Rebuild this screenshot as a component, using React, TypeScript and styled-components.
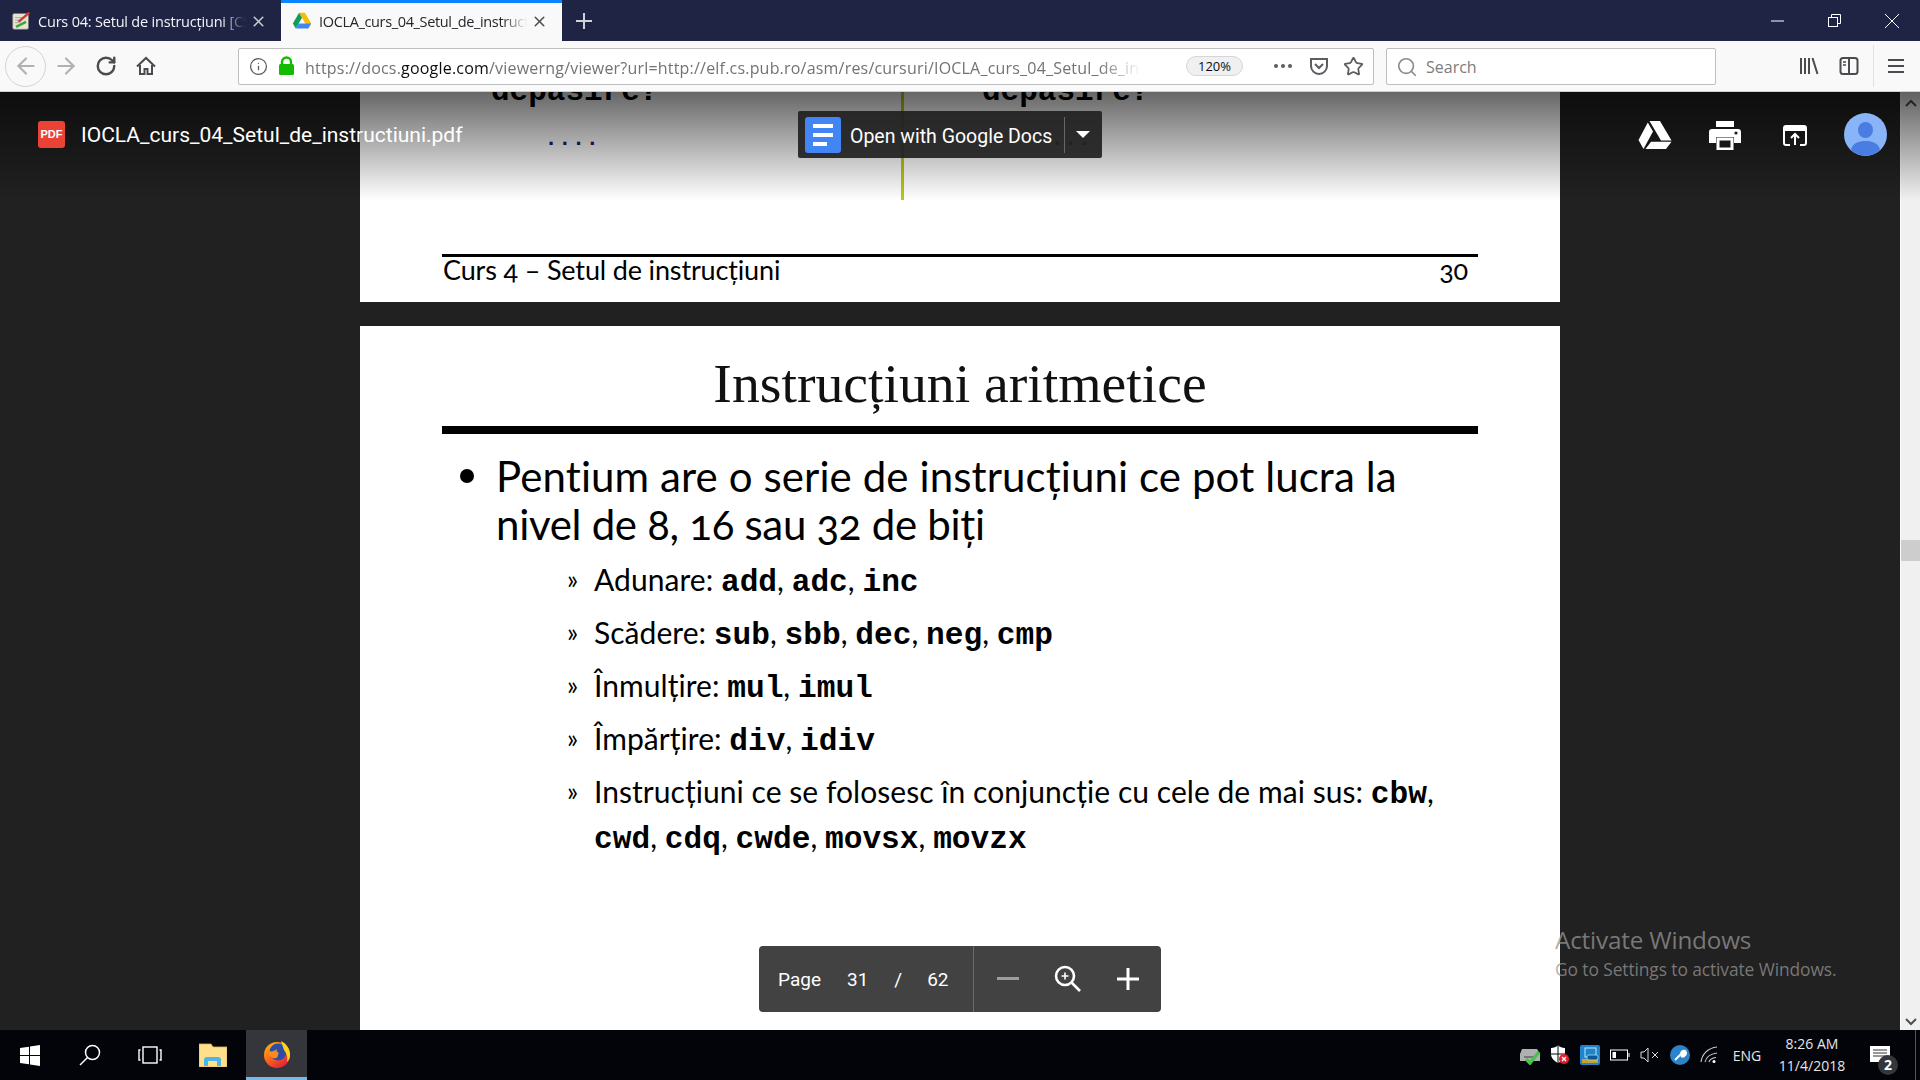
import React from "react";
import styled, { createGlobalStyle } from "styled-components";
import { ArrowLeft, ArrowRight, Info, RotateCw, Search, Star, X } from "lucide-react";

const GlobalStyle = createGlobalStyle`
	html, body {
		margin: 0;
		padding: 0;
		width: 1920px;
		height: 1080px;
		overflow: hidden;
		background: #212121;
		font-family: "Open Sans", sans-serif;
	}
`;

const Screen = styled.div`
	width: 1920px;
	height: 1080px;
	display: flex;
	flex-direction: column;
	overflow: hidden;
`;

const TabStrip = styled.div`
	height: 41px;
	flex: none;
	display: flex;
	background: #1f2445;
`;

const Tab = styled.div<{ $active?: boolean }>`
	width: 281px;
	height: 41px;
	box-sizing: border-box;
	display: flex;
	align-items: center;
	padding: ${(p) => (p.$active ? "0 11px 2px 11px" : "1px 11px 0 11px")};
	background: ${(p) => (p.$active ? "#f9f9fa" : "transparent")};
	border-top: ${(p) => (p.$active ? "3px solid #0a84ff" : "none")};
	color: ${(p) => (p.$active ? "#26262b" : "#f4f4f6")};
`;

const TabIcon = styled.svg`
	width: 20px;
	height: 20px;
	flex: none;
`;

const TabTitle = styled.div<{ $tight?: boolean }>`
	width: 208px;
	margin-left: 7px;
	font-size: 14.5px;
	letter-spacing: ${(p) => (p.$tight ? "-0.35px" : "-0.2px")};
	white-space: nowrap;
	overflow: hidden;
	mask-image: linear-gradient(to right, #000 88%, transparent 100%);
`;

const TabClose = styled.div`
	margin-left: 4px;
	display: flex;
	color: inherit;
	opacity: 0.8;
`;

const NewTab = styled.div`
	width: 44px;
	height: 41px;
	display: flex;
	align-items: center;
	justify-content: center;
	color: #d0d2da;
`;

const WindowControls = styled.div`
	margin-left: auto;
	display: flex;
`;

const WindowButton = styled.div`
	width: 57px;
	height: 41px;
	display: flex;
	align-items: center;
	justify-content: center;
`;

const Toolbar = styled.div`
	height: 51px;
	flex: none;
	box-sizing: border-box;
	display: flex;
	align-items: center;
	background: #f9f9fa;
	border-bottom: 1px solid #cfcfd2;
	padding-left: 5px;
`;

const BackButton = styled.div`
	width: 41px;
	height: 41px;
	box-sizing: border-box;
	border: 1px solid #d4d4d6;
	border-radius: 50%;
	display: flex;
	align-items: center;
	justify-content: center;
	color: #b1b1b3;
`;

const NavButton = styled.div<{ $dim?: boolean }>`
	width: 40px;
	height: 40px;
	display: flex;
	align-items: center;
	justify-content: center;
	color: ${(p) => (p.$dim ? "#b1b1b3" : "#4a4a4f")};
`;

const UrlBar = styled.div`
	width: 1136px;
	height: 37px;
	margin-left: 72px;
	box-sizing: border-box;
	border: 1px solid #bebec0;
	border-radius: 2px;
	background: #fff;
	display: flex;
	align-items: center;
	color: #5c5c61;
`;

const UrlIcon = styled.div<{ $width: number }>`
	width: ${(p) => p.$width}px;
	flex: none;
	display: flex;
	justify-content: center;
`;

const UrlText = styled.div`
	width: 836px;
	flex: none;
	margin-left: 10px;
	padding-top: 3px;
	font-size: 16px;
	letter-spacing: 0.2px;
	color: #737373;
	white-space: nowrap;
	overflow: hidden;
	mask-image: linear-gradient(to right, #000 95%, transparent 100%);
`;

const UrlDomain = styled.span`
	color: #0c0c0d;
`;

const ZoomPill = styled.div`
	width: 57px;
	height: 20px;
	margin-left: 45px;
	flex: none;
	border: 1px solid #d6d6d8;
	box-sizing: border-box;
	border-radius: 10px;
	background: #f0f0f2;
	font-size: 13px;
	line-height: 18px;
	text-align: center;
	color: #0c0c0d;
`;

const UrlSeparator = styled.div`
	width: 1px;
	height: 26px;
	margin-left: 15px;
	background: #e0e0e2;
`;

const SearchBox = styled.div`
	width: 330px;
	height: 37px;
	margin-left: 12px;
	box-sizing: border-box;
	border: 1px solid #bebec0;
	border-radius: 2px;
	background: #fff;
	display: flex;
	align-items: center;
	padding: 2px 0 0 9px;
	gap: 8px;
	color: #7c7c80;
	font-size: 16px;
`;

const ToolbarEnd = styled.div`
	margin-left: 73px;
	display: flex;
	align-items: center;
	color: #4a4a4f;
`;

const ToolbarSeparator = styled.div`
	width: 1px;
	height: 42px;
	margin: 0 3px 0 4px;
	background: #e2e2e4;
`;

const Viewer = styled.div`
	position: relative;
	flex: 1;
	min-height: 0;
	overflow: hidden;
	background: #212121;
	display: flex;
	flex-direction: column;
	align-items: center;
`;

const Page = styled.div<{ $height: number }>`
	width: 1200px;
	height: ${(p) => p.$height}px;
	flex: none;
	box-sizing: border-box;
	padding: 0 82px;
	background: #fff;
	color: #000;
	overflow: hidden;
	position: relative;
`;

const ClippedRow = styled.div`
	display: flex;
	height: 163px;
	margin-top: -15px;
	padding-left: 49px;
`;

const ClippedColumn = styled.div<{ $width: number }>`
	width: ${(p) => p.$width}px;
	flex: none;
`;

const ClippedWord = styled.div`
	font: bold 31px/30px "Liberation Mono", monospace;
`;

const Dots = styled.div<{ $left: number }>`
	margin: 21px 0 0 ${(p) => p.$left}px;
	font: bold 22px/20px "Liberation Sans", sans-serif;
	letter-spacing: 7.6px;
	color: #1a1a78;
`;

const AccentLine = styled.div`
	position: absolute;
	left: 541px;
	top: 0;
	width: 3px;
	height: 108px;
	background: #bcc80e;
`;

const FooterRule = styled.div`
	height: 3px;
	margin-top: 14px;
	background: #000;
`;

const FooterRow = styled.div`
	display: flex;
	justify-content: space-between;
	margin-top: -2px;
	padding: 0 10px 0 1px;
	font-family: Lato, sans-serif;
	font-size: 27px;
	line-height: 30px;
	letter-spacing: -0.15px;
	font-feature-settings: "onum";
`;

const SlideGap = styled.div`
	height: 24px;
	flex: none;
`;

const SlideTitle = styled.div`
	height: 100px;
	box-sizing: border-box;
	padding-top: 27px;
	text-align: center;
	font-family: "Liberation Serif", serif;
	font-size: 55.7px;
	line-height: 60px;
	color: #111;
`;

const TitleRule = styled.div`
	height: 8px;
	background: #000;
`;

const Lead = styled.div`
	display: grid;
	grid-template-columns: 54px 1fr;
	margin-top: 18px;
	font-family: Lato, sans-serif;
	font-size: 42px;
	line-height: 48px;
	letter-spacing: 0.1px;
	font-feature-settings: "onum";
`;

const LeadTight = styled.span`
	letter-spacing: -0.3px;
`;

const BulletDot = styled.div`
	width: 14px;
	height: 14px;
	margin: 17px 0 0 18px;
	border-radius: 50%;
	background: #000;
`;

const SubList = styled.div`
	margin: 9px 0 0 125px;
	display: flex;
	flex-direction: column;
	gap: 8px;
`;

const SubItem = styled.div`
	display: grid;
	grid-template-columns: 27px 1fr;
	font-family: Lato, sans-serif;
	font-size: 30px;
	line-height: 45px;
	letter-spacing: 0.05px;
`;

const SubMarker = styled.div`
	font-size: 26px;
`;

const Code = styled.b`
	font: bold 31.2px/1 "Liberation Mono", monospace;
	letter-spacing: 0;
`;

const ScrollTrack = styled.div`
	position: absolute;
	top: 0;
	right: 0;
	bottom: 0;
	width: 20px;
	box-sizing: border-box;
	border-left: 1px solid #fafafa;
	background: #f0f0f0;
	display: flex;
	flex-direction: column;
	align-items: center;
	justify-content: space-between;
	padding: 7px 0 4px;
	color: #505050;
`;

const ScrollThumb = styled.div`
	position: absolute;
	top: 448px;
	left: 0;
	right: 0;
	height: 21px;
	background: #cdcdcd;
`;

const ViewerHeader = styled.div`
	position: absolute;
	top: 0;
	left: 0;
	right: 0;
	height: 108px;
	box-sizing: border-box;
	padding: 19px 20px 0 38px;
	display: grid;
	grid-template-columns: 760px 304px 1fr;
	grid-template-rows: 47px;
	align-items: center;
	background: linear-gradient(to bottom, rgba(0, 0, 0, 0.6), rgba(0, 0, 0, 0));
`;

const FileName = styled.div`
	display: flex;
	align-items: center;
	gap: 16px;
	font-family: Roboto, sans-serif;
	font-size: 21px;
	color: #fff;
`;

const FileLabel = styled.span`
	padding-top: 1px;
`;

const PdfBadge = styled.div`
	width: 27px;
	height: 27px;
	border-radius: 3px;
	background: #ea4335;
	color: #fff;
	font: bold 11px/27px "Liberation Sans", sans-serif;
	text-align: center;
`;

const OpenWith = styled.div`
	height: 47px;
	box-sizing: border-box;
	padding: 0 7px;
	display: flex;
	align-items: center;
	border-radius: 2px;
	background: rgba(33, 33, 33, 0.93);
	font-family: Roboto, sans-serif;
	font-size: 19.5px;
	color: #fff;
	white-space: nowrap;
`;

const OpenLabel = styled.span`
	padding-top: 3px;
`;

const DocsTile = styled.div`
	width: 36px;
	height: 36px;
	flex: none;
	margin-right: 9px;
	border-radius: 3px;
	background: #4285f4;
	display: flex;
	flex-direction: column;
	justify-content: center;
	gap: 5px;
	padding-left: 8px;
	box-sizing: border-box;
`;

const DocsLine = styled.div<{ $width: number }>`
	width: ${(p) => p.$width}px;
	height: 4px;
	background: #fff;
`;

const OpenDivider = styled.div`
	width: 1px;
	height: 36px;
	flex: none;
	margin-left: 12px;
	background: #666;
`;

const Caret = styled.div`
	margin-left: 11px;
	width: 0;
	height: 0;
	flex: none;
	border-left: 7px solid transparent;
	border-right: 7px solid transparent;
	border-top: 7px solid #fff;
`;

const HeaderActions = styled.div`
	display: flex;
	justify-content: flex-end;
`;

const ActionSlot = styled.div`
	width: 70px;
	display: flex;
	justify-content: center;
	align-items: center;
`;

const PageControls = styled.div`
	position: absolute;
	left: 759px;
	top: 854px;
	width: 402px;
	height: 66px;
	border-radius: 4px;
	background: #424242;
	color: #fff;
	display: flex;
	align-items: center;
	font-family: Roboto, sans-serif;
	font-size: 19px;
`;

const PageInfo = styled.div`
	width: 215px;
	height: 100%;
	margin-right: 4px;
	box-sizing: border-box;
	padding-left: 19px;
	border-right: 1px solid #6b6b6b;
	display: flex;
	align-items: center;
`;

const PageNumber = styled.span<{ $left: number }>`
	margin-left: ${(p) => p.$left}px;
`;

const ZoomButton = styled.div`
	width: 60px;
	display: flex;
	justify-content: center;
`;

const Watermark = styled.div`
	position: absolute;
	left: 1555px;
	top: 832px;
	color: rgba(150, 150, 150, 0.75);
	font-family: "Open Sans", sans-serif;
`;

const WatermarkTitle = styled.div`
	font-size: 24.3px;
	line-height: 32px;
	letter-spacing: -0.2px;
`;

const WatermarkText = styled.div`
	font-size: 17.4px;
	line-height: 26px;
	letter-spacing: -0.1px;
`;

const Taskbar = styled.div`
	height: 50px;
	flex: none;
	display: flex;
	align-items: center;
	background: #03040a;
	color: #e6e6e6;
`;

const TaskSlot = styled.div<{ $active?: boolean; $width: number }>`
	width: ${(p) => p.$width}px;
	height: 50px;
	box-sizing: border-box;
	display: flex;
	align-items: center;
	justify-content: center;
	background: ${(p) => (p.$active ? "#34363b" : "transparent")};
	border-bottom: ${(p) => (p.$active ? "3px solid #76b9ed" : "none")};
`;

const Tray = styled.div`
	margin-left: auto;
	display: flex;
	align-items: center;
	height: 50px;
`;

const TraySlot = styled.div`
	width: 30px;
	display: flex;
	justify-content: center;
`;

const TrayLabel = styled.div`
	width: 44px;
	text-align: center;
	font-size: 14px;
`;

const Clock = styled.div`
	width: 86px;
	text-align: center;
	font-size: 14px;
	line-height: 22px;
`;

const Notifications = styled.div`
	width: 50px;
	height: 50px;
	display: flex;
	align-items: center;
	justify-content: center;
	margin-right: 10px;
	box-sizing: border-box;
	position: relative;
`;

const NotifyBadge = styled.div`
	position: absolute;
	left: 23px;
	top: 25px;
	width: 20px;
	height: 20px;
	border-radius: 50%;
	background: #34363b;
	color: #fff;
	font-size: 14px;
	font-weight: bold;
	line-height: 20px;
	text-align: center;
`;

const ShowDesktop = styled.div`
	width: 5px;
	height: 50px;
	box-sizing: border-box;
	border-left: 1px solid #555;
`;

const DriveColor = () => (
	<TabIcon viewBox="0 0 24 24">
		<polygon points="8.5,2 15.5,2 23,15 19.5,21 12,8" fill="#fbbc04" />
		<polygon points="8.5,2 12,8 4.5,21 1,15" fill="#0f9d58" />
		<polygon points="4.5,21 8,15 23,15 19.5,21" fill="#4285f4" />
	</TabIcon>
);

const NotesIcon = () => (
	<TabIcon viewBox="0 0 24 24">
		<rect x="2" y="3" width="19" height="19" rx="2" fill="#e8e4d4" stroke="#777" />
		<path d="M5 8h9M5 11h7M5 14h4" stroke="#999" strokeWidth="1" />
		<path d="M9 13L22 2" stroke="#c8402a" strokeWidth="3" />
		<path d="M6 19l12-6" stroke="#3fa63a" strokeWidth="3" />
	</TabIcon>
);

const Home = () => (
	<svg width="22" height="22" viewBox="0 0 22 22" fill="none" stroke="currentColor" strokeWidth="2">
		<path d="M2 11.5L11 3l9 8.5" />
		<path d="M5 10v9h4.5v-5h3v5H17v-9" />
	</svg>
);

const LockIcon = () => (
	<svg width="17" height="20" viewBox="0 0 17 20">
		<path d="M4 9V6a4.500 4.500 0 0 1 9 0v3" fill="none" stroke="#12bc00" strokeWidth="2.400" />
		<rect x="1" y="8" width="15" height="11" rx="1.500" fill="#12bc00" />
	</svg>
);

const Pocket = () => (
	<svg width="20" height="20" viewBox="0 0 20 20" fill="none" stroke="currentColor" strokeWidth="2">
		<path d="M2 3h16v7a8 8 0 0 1-16 0z" />
		<path d="M6 8l4 4 4-4" />
	</svg>
);

const MoreDots = () => (
	<svg width="20" height="6" viewBox="0 0 20 6" fill="currentColor">
		<circle cx="3" cy="3" r="2" />
		<circle cx="10" cy="3" r="2" />
		<circle cx="17" cy="3" r="2" />
	</svg>
);

const Library = () => (
	<svg width="20" height="20" viewBox="0 0 20 20" fill="none" stroke="currentColor" strokeWidth="2">
		<path d="M2 2v16M6 2v16M10 2v16M13.5 2l5 16" />
	</svg>
);

const Sidebar = () => (
	<svg width="20" height="20" viewBox="0 0 20 20" fill="none" stroke="currentColor" strokeWidth="2">
		<rect x="1.5" y="2" width="17" height="16" rx="2.5" />
		<path d="M10 2v16" />
		<path d="M4 6h3M4 9h3" strokeWidth="1.5" />
	</svg>
);

const Hamburger = () => (
	<svg width="18" height="16" viewBox="0 0 18 16" fill="currentColor">
		<rect y="1" width="16" height="2" />
		<rect y="7" width="16" height="2" />
		<rect y="13" width="16" height="2" />
	</svg>
);

const DriveWhite = () => (
	<svg width="34" height="30" viewBox="0 0 34 30" fill="#fff">
		<polygon points="11.5,1 22,1 33.5,20.5 23,20.5" />
		<polygon points="9.8,2.5 15,11.5 5.5,29 0.5,20" />
		<polygon points="7.5,29 13,21.8 33.5,21.8 28,29" />
	</svg>
);

const PrintIcon = () => (
	<svg width="32" height="30" viewBox="0 0 32 30" fill="#fff">
		<rect x="7" y="1" width="18" height="6" />
		<path d="M3 9h26a3 3 0 0 1 3 3v11h-7v-6H7v6H0V12a3 3 0 0 1 3-3z" />
		<rect x="9" y="19" width="14" height="10" fill="none" stroke="#fff" strokeWidth="3" />
		<circle cx="27" cy="13" r="1.6" fill="#1a1a1a" />
	</svg>
);

const OpenIcon = () => (
	<svg width="24" height="22" viewBox="0 0 24 22" fill="none" stroke="#fff" strokeWidth="2">
		<path d="M7 21H3a2 2 0 0 1-2-2V5h22v14a2 2 0 0 1-2 2h-4" />
		<path d="M1 4a2 2 0 0 1 2-2h18a2 2 0 0 1 2 2v2H1z" fill="#fff" />
		<path d="M12 21V10M8 14l4-4 4 4" />
	</svg>
);

const AvatarIcon = () => (
	<svg width="43" height="43" viewBox="0 0 43 43">
		<circle cx="21.5" cy="21.5" r="21.5" fill="#8ab4f8" />
		<ellipse cx="21.5" cy="17" rx="7.5" ry="8" fill="#4a7de2" />
		<path d="M7 37c1-7 8-9 14.5-9S35 30 36 37a21.5 21.5 0 0 1-29 0z" fill="#4a7de2" />
	</svg>
);

const ZoomLens = () => (
	<svg width="30" height="30" viewBox="0 0 30 30" fill="none" stroke="#fff" strokeWidth="2.6">
		<circle cx="12" cy="12" r="9" />
		<path d="M18.5 18.5L27 27" />
		<path d="M8.5 12h7M12 8.5v7" strokeWidth="1.6" />
	</svg>
);

const MinusGlyph = () => (
	<svg width="26" height="4" viewBox="0 0 26 4">
		<path d="M2 0h22v3H2z" fill="#9e9e9e" />
	</svg>
);

const WindowsLogo = () => (
	<svg width="20" height="21" viewBox="0 0 20 21" fill="#fff">
		<polygon points="0,3 9,1.7 9,10 0,10" />
		<polygon points="10,1.5 20,0 20,10 10,10" />
		<polygon points="0,11 9,11 9,19.3 0,18" />
		<polygon points="10,11 20,11 20,21 10,19.5" />
	</svg>
);

const TaskSearch = () => (
	<svg width="22" height="22" viewBox="0 0 22 22" fill="none" stroke="#fff" strokeWidth="1.5">
		<circle cx="13.5" cy="8.5" r="7" />
		<path d="M8.5 13.5L1 21" />
	</svg>
);

const TaskView = () => (
	<svg width="24" height="18" viewBox="0 0 24 18" fill="none" stroke="#fff" strokeWidth="1.4">
		<rect x="5" y="1" width="14" height="16" />
		<path d="M2.5 4H1v10h1.5M21.5 4H23v10h-1.5" />
	</svg>
);

const FolderIcon = () => (
	<svg width="28" height="24" viewBox="0 0 28 24">
		<path d="M0 1h12l2 3h14v20H0z" fill="#ffe08a" stroke="#d9b65a" strokeWidth="0.8" />
		<path d="M5 23v-6a3 3 0 0 1 3-3h11a3 3 0 0 1 3 3v6h-4v-5H9v5z" fill="#4cb4e8" />
	</svg>
);

const FirefoxLogo = () => (
	<svg width="28" height="28" viewBox="0 0 28 28">
		<defs>
			<linearGradient id="fx" x1="0" y1="0" x2="0.7" y2="1">
				<stop offset="0" stopColor="#ffcb00" />
				<stop offset="0.5" stopColor="#ff6b1a" />
				<stop offset="1" stopColor="#e0203a" />
			</linearGradient>
		</defs>
		<circle cx="14" cy="15" r="13" fill="url(#fx)" />
		<circle cx="15" cy="12" r="8.5" fill="#2c4ca8" />
		<path d="M18 1c6 3 9 8 9 14 0 4-2 6-3 7 1-4 0-8-3-12-1-3-2-6-3-9z" fill="#ffd21e" />
		<path d="M6 11c3 1 5 0 8-2-1 2 0 3 2 4-2 2 0 4-3 5-3 1-6-1-7-4z" fill="#ff8a1f" />
	</svg>
);

const PrinterTray = () => (
	<svg width="22" height="20" viewBox="0 0 22 20">
		<path d="M3 4h15l3 5v7H1V9z" fill="#b0b0b0" />
		<path d="M5 11h10v2H5z" fill="#777" />
		<path d="M7 14l4 4 9-11" fill="none" stroke="#47c44a" strokeWidth="3.4" />
	</svg>
);

const ShieldTray = () => (
	<svg width="20" height="20" viewBox="0 0 20 20">
		<path d="M1 3c3 0 5-1 7-2.500 2 1.500 4 2.500 7 2.500v6c0 4-3 7-7 9-4-2-7-5-7-9z" fill="#fff" />
		<path d="M8 1v17M1 9h14" stroke="#03040a" strokeWidth="1" />
		<circle cx="14" cy="14" r="5" fill="#e0202e" />
		<path d="M12 12l4 4M16 12l-4 4" stroke="#fff" strokeWidth="1.300" />
	</svg>
);

const IntelTray = () => (
	<svg width="20" height="20" viewBox="0 0 20 20">
		<rect width="20" height="20" rx="2" fill="#1f84c9" />
		<rect x="5" y="3" width="11" height="9" fill="none" stroke="#bfe6ff" />
		<rect x="2" y="14" width="16" height="4" fill="#c7a22c" />
		<rect x="7" y="10" width="11" height="5" rx="2" fill="#0e5a95" stroke="#bfe6ff" strokeWidth="0.700" />
	</svg>
);

const BatteryTray = () => (
	<svg width="20" height="12" viewBox="0 0 20 12" fill="none" stroke="#fff">
		<rect x="0.500" y="1" width="17" height="10" />
		<rect x="2.500" y="3" width="3.500" height="6" fill="#fff" stroke="none" />
		<path d="M19 4v4" />
	</svg>
);

const MutedTray = () => (
	<svg width="20" height="16" viewBox="0 0 20 16" fill="none" stroke="#ddd">
		<path d="M1 5h3l4-4v14l-4-4H1z" />
		<path d="M12 5l6 6M18 5l-6 6" />
	</svg>
);

const WrenchTray = () => (
	<svg width="20" height="20" viewBox="0 0 20 20">
		<circle cx="10" cy="10" r="10" fill="#2b83c8" />
		<path d="M5 15l6-6M11 9c0-2 2-4 4-3l-2 2 1 1 2-1c0 3-3 4-5 3" stroke="#fff" strokeWidth="2" fill="#fff" />
	</svg>
);

const WifiTray = () => (
	<svg width="20" height="18" viewBox="0 0 20 18" fill="none" stroke="#ccc" strokeWidth="1.100">
		<path d="M1 16C2 8 8 2 17 1" />
		<path d="M5 16c1-5 5-8 12-9" />
		<path d="M9 16c.5-2 3-4 7-4.500" />
		<circle cx="14" cy="15.500" r="1.500" fill="#fff" stroke="none" />
	</svg>
);

const NoteIcon = () => (
	<svg width="20" height="18" viewBox="0 0 20 18">
		<rect width="20" height="16" fill="#fff" />
		<path d="M3 4h14M3 7h14M3 10h14" stroke="#333" />
	</svg>
);

const App = () => (
	<Screen>
		<GlobalStyle />
		<TabStrip>
			<Tab>
				<NotesIcon />
				<TabTitle>Curs 04: Setul de instrucțiuni [CS.pub.ro]</TabTitle>
				<TabClose>
					<X size={17} strokeWidth={2.2} />
				</TabClose>
			</Tab>
			<Tab $active>
				<DriveColor />
				<TabTitle $tight>IOCLA_curs_04_Setul_de_instructiuni.pdf</TabTitle>
				<TabClose>
					<X size={17} strokeWidth={2.2} />
				</TabClose>
			</Tab>
			<NewTab>
				<svg width="18" height="18" viewBox="0 0 18 18" stroke="currentColor" strokeWidth="2">
					<path d="M9 1v16M1 9h16" />
				</svg>
			</NewTab>
			<WindowControls>
				<WindowButton>
					<svg width="13" height="2" viewBox="0 0 13 2">
						<path d="M0 1h13" stroke="#fff" />
					</svg>
				</WindowButton>
				<WindowButton>
					<svg width="13" height="13" viewBox="0 0 13 13" fill="none" stroke="#fff">
						<rect x="0.500" y="3.500" width="9" height="9" />
						<path d="M3.500 3V.5h9v9H10" />
					</svg>
				</WindowButton>
				<WindowButton>
					<svg width="14" height="14" viewBox="0 0 14 14" stroke="#fff">
						<path d="M0 0l14 14M14 0L0 14" />
					</svg>
				</WindowButton>
			</WindowControls>
		</TabStrip>

		<Toolbar>
			<BackButton>
				<ArrowLeft size={26} strokeWidth={2} />
			</BackButton>
			<NavButton $dim>
				<ArrowRight size={26} strokeWidth={2} />
			</NavButton>
			<NavButton>
				<RotateCw size={22} strokeWidth={2.6} />
			</NavButton>
			<NavButton>
				<Home />
			</NavButton>
			<UrlBar>
				<UrlIcon $width={38}>
					<Info size={19} strokeWidth={1.6} />
				</UrlIcon>
				<UrlIcon $width={18}>
					<LockIcon />
				</UrlIcon>
				<UrlText>
					https://docs.<UrlDomain>google.com</UrlDomain>
					/viewerng/viewer?url=http://elf.cs.pub.ro/asm/res/cursuri/IOCLA_curs_04_Setul_de_instructiuni.pdf
				</UrlText>
				<ZoomPill>120%</ZoomPill>
				<UrlSeparator />
				<UrlIcon $width={50}>
					<MoreDots />
				</UrlIcon>
				<UrlIcon $width={22}>
					<Pocket />
				</UrlIcon>
				<UrlIcon $width={47}>
					<Star size={21} strokeWidth={2} />
				</UrlIcon>
			</UrlBar>
			<SearchBox>
				<Search size={22} strokeWidth={1.8} color="#8a8a8c" />
				Search
			</SearchBox>
			<ToolbarEnd>
				<NavButton>
					<Library />
				</NavButton>
				<NavButton>
					<Sidebar />
				</NavButton>
				<ToolbarSeparator />
				<NavButton>
					<Hamburger />
				</NavButton>
			</ToolbarEnd>
		</Toolbar>

		<Viewer>
			<Page $height={210}>
				<ClippedRow>
					<ClippedColumn $width={491}>
						<ClippedWord>depasire?</ClippedWord>
						<Dots $left={57}>....</Dots>
					</ClippedColumn>
					<ClippedColumn $width={300}>
						<ClippedWord>depasire?</ClippedWord>
						<Dots $left={72}>...</Dots>
					</ClippedColumn>
				</ClippedRow>
				<AccentLine />
				<FooterRule />
				<FooterRow>
					<span>Curs 4 – Setul de instrucțiuni</span>
					<span>30</span>
				</FooterRow>
			</Page>
			<SlideGap />
			<Page $height={720}>
				<SlideTitle>Instrucțiuni aritmetice</SlideTitle>
				<TitleRule />
				<Lead>
					<BulletDot />
					<div>
						Pentium are o serie de instrucțiuni ce pot lucra la
						<br />
						<LeadTight>nivel de 8, 16 sau 32 de biți</LeadTight>
					</div>
				</Lead>
				<SubList>
					<SubItem>
						<SubMarker>»</SubMarker>
						<div>
							Adunare: <Code>add</Code>, <Code>adc</Code>, <Code>inc</Code>
						</div>
					</SubItem>
					<SubItem>
						<SubMarker>»</SubMarker>
						<div>
							Scădere: <Code>sub</Code>, <Code>sbb</Code>, <Code>dec</Code>, <Code>neg</Code>, <Code>cmp</Code>
						</div>
					</SubItem>
					<SubItem>
						<SubMarker>»</SubMarker>
						<div>
							Înmulțire: <Code>mul</Code>, <Code>imul</Code>
						</div>
					</SubItem>
					<SubItem>
						<SubMarker>»</SubMarker>
						<div>
							Împărțire: <Code>div</Code>, <Code>idiv</Code>
						</div>
					</SubItem>
					<SubItem>
						<SubMarker>»</SubMarker>
						<div>
							Instrucțiuni ce se folosesc în conjuncție cu cele de mai sus: <Code>cbw</Code>,
							<br />
							<Code>cwd</Code>, <Code>cdq</Code>, <Code>cwde</Code>, <Code>movsx</Code>, <Code>movzx</Code>
						</div>
					</SubItem>
				</SubList>
			</Page>

			<ScrollTrack>
				<svg width="12" height="8" viewBox="0 0 12 8" fill="none" stroke="currentColor" strokeWidth="2">
					<path d="M1 7l5-5 5 5" />
				</svg>
				<ScrollThumb />
				<svg width="12" height="8" viewBox="0 0 12 8" fill="none" stroke="currentColor" strokeWidth="2">
					<path d="M1 1l5 5 5-5" />
				</svg>
			</ScrollTrack>

			<ViewerHeader>
				<FileName>
					<PdfBadge>PDF</PdfBadge>
					<FileLabel>IOCLA_curs_04_Setul_de_instructiuni.pdf</FileLabel>
				</FileName>
				<OpenWith>
					<DocsTile>
						<DocsLine $width={20} />
						<DocsLine $width={20} />
						<DocsLine $width={14} />
					</DocsTile>
					<OpenLabel>Open with Google Docs</OpenLabel>
					<OpenDivider />
					<Caret />
				</OpenWith>
				<HeaderActions>
					<ActionSlot>
						<DriveWhite />
					</ActionSlot>
					<ActionSlot>
						<PrintIcon />
					</ActionSlot>
					<ActionSlot>
						<OpenIcon />
					</ActionSlot>
					<ActionSlot>
						<AvatarIcon />
					</ActionSlot>
				</HeaderActions>
			</ViewerHeader>

			<PageControls>
				<PageInfo>
					Page
					<PageNumber $left={26}>31</PageNumber>
					<PageNumber $left={26}>/</PageNumber>
					<PageNumber $left={25}>62</PageNumber>
				</PageInfo>
				<ZoomButton>
					<MinusGlyph />
				</ZoomButton>
				<ZoomButton>
					<ZoomLens />
				</ZoomButton>
				<ZoomButton>
					<svg width="24" height="24" viewBox="0 0 24 24" stroke="#fff" strokeWidth="3">
						<path d="M12 1v22M1 12h22" />
					</svg>
				</ZoomButton>
			</PageControls>

			<Watermark>
				<WatermarkTitle>Activate Windows</WatermarkTitle>
				<WatermarkText>Go to Settings to activate Windows.</WatermarkText>
			</Watermark>
		</Viewer>

		<Taskbar>
			<TaskSlot $width={60}>
				<WindowsLogo />
			</TaskSlot>
			<TaskSlot $width={60}>
				<TaskSearch />
			</TaskSlot>
			<TaskSlot $width={60}>
				<TaskView />
			</TaskSlot>
			<TaskSlot $width={66}>
				<FolderIcon />
			</TaskSlot>
			<TaskSlot $active $width={61}>
				<FirefoxLogo />
			</TaskSlot>
			<Tray>
				<TraySlot>
					<PrinterTray />
				</TraySlot>
				<TraySlot>
					<ShieldTray />
				</TraySlot>
				<TraySlot>
					<IntelTray />
				</TraySlot>
				<TraySlot>
					<BatteryTray />
				</TraySlot>
				<TraySlot>
					<MutedTray />
				</TraySlot>
				<TraySlot>
					<WrenchTray />
				</TraySlot>
				<TraySlot>
					<WifiTray />
				</TraySlot>
				<TrayLabel>ENG</TrayLabel>
				<Clock>
					8:26 AM
					<br />
					11/4/2018
				</Clock>
				<Notifications>
					<NoteIcon />
					<NotifyBadge>2</NotifyBadge>
				</Notifications>
				<ShowDesktop />
			</Tray>
		</Taskbar>
	</Screen>
);

export default App;
